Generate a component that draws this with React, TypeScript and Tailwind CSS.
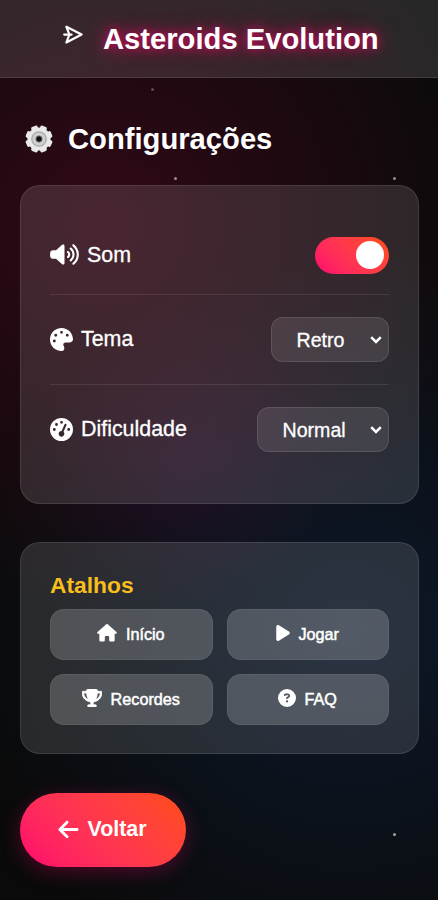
import React, { useState } from 'react'
import type { IconType } from 'react-icons'
import {
  FaArrowLeft,
  FaCircleQuestion,
  FaGaugeHigh,
  FaHouse,
  FaPalette,
  FaPlay,
  FaTrophy,
  FaVolumeHigh,
} from 'react-icons/fa6'

interface IShortcut {
  label: string
  icon: IconType
  iconClass: string
}

const shortcuts: IShortcut[] = [
  { label: 'Início', icon: FaHouse, iconClass: 'w-[20px] h-[17.5px] -mt-[3px]' },
  { label: 'Jogar', icon: FaPlay, iconClass: 'w-[14px] h-[18px] -mt-[3px]' },
  {
    label: 'Recordes',
    icon: FaTrophy,
    iconClass: 'w-[20px] h-[18px] -mt-[3px] [stroke:white] [stroke-width:22px]',
  },
  { label: 'FAQ', icon: FaCircleQuestion, iconClass: 'size-[18px] -mt-[3px]' },
]

const stars = [
  'left-[151px] top-[88px] opacity-40',
  'left-[174px] top-[177px] opacity-80',
  'left-[393px] top-[177px] opacity-80',
  'left-[393px] top-[833px] opacity-90',
]

const ShipIcon = () => (
  <svg
    viewBox="0 0 20 20"
    className="w-5 h-5 -mt-[10px]"
    fill="none"
    stroke="white"
    strokeWidth="2.2"
    strokeLinejoin="round"
    strokeLinecap="round"
  >
    <path d="M3.4 1.8 L18.6 9.6 L3.4 17.4 L6.4 9.6 Z" />
    <path d="M1.2 9.6 H8.6" />
  </svg>
)

const GearIcon = () => (
  <svg viewBox="0 0 28 28" className="w-7 h-7">
    <g fill="#e9e9e9">
      {[0, 45, 90, 135].map((angle) => (
        <rect
          key={angle}
          x="10.6"
          y="0.4"
          width="6.8"
          height="27.2"
          rx="1.6"
          transform={`rotate(${angle + 22.5} 14 14)`}
        />
      ))}
      <circle cx="14" cy="14" r="11.6" />
    </g>
    <circle cx="14" cy="14" r="7.2" fill="#cfcfcf" stroke="#a8a8a8" strokeWidth="1.3" />
    <circle cx="14" cy="14" r="3.2" fill="#151013" stroke="#8b8b8b" strokeWidth="0.8" />
  </svg>
)

const SelectBox: React.FC<{
  value: string
  options: string[]
  className: string
  onChange: (v: string) => void
}> = ({ value, options, className, onChange }) => (
  <div className={`relative h-[45px] ${className}`}>
    <select
      value={value}
      onChange={(e) => onChange(e.target.value)}
      className="w-full h-full appearance-none rounded-[12px] border border-white/10 bg-white/10 pl-[24.5px] pt-[2px] text-[19.6px] text-white outline-none [-webkit-text-stroke:0.3px_white]"
    >
      {options.map((o) => (
        <option key={o} className="bg-neutral-900">
          {o}
        </option>
      ))}
    </select>
    <svg
      viewBox="0 0 12 8"
      className="pointer-events-none absolute right-[7px] top-[19px] w-3 h-2"
      fill="none"
      stroke="white"
      strokeWidth="2.5"
    >
      <path d="M1.2 1.2 L6 6 L10.8 1.2" />
    </svg>
  </div>
)

const App = () => {
  const [sound, setSound] = useState(true)
  const [theme, setTheme] = useState('Retro')
  const [difficulty, setDifficulty] = useState('Normal')

  return (
    <div className="relative h-[900px] w-[438px] overflow-hidden bg-[#0a0a0a] bg-[radial-gradient(circle_at_24%_25%,rgba(255,0,85,0.155),transparent_52%),radial-gradient(circle_at_80%_70%,rgba(30,120,255,0.13),transparent_54%),radial-gradient(circle_at_42%_50%,rgba(160,10,130,0.07),transparent_28%)] font-['Liberation_Sans',Arial,sans-serif] text-white">
      {stars.map((s) => (
        <span key={s} className={`absolute size-[3px] rounded-full bg-[#b9aeb6] ${s}`} />
      ))}

      {/* Header */}
      <header className="flex h-[78px] items-center border-b border-white/10 bg-white/[0.12] pl-[63px] pt-[2px]">
        <ShipIcon />
        <h1 className="ml-[20px] whitespace-nowrap text-[29.2px] font-bold leading-none [text-shadow:0_0_10px_rgba(255,0,110,0.7),0_0_20px_rgba(255,0,110,0.6)]">
          Asteroids Evolution
        </h1>
      </header>

      <main className="pl-5 pr-[19px]">
        <div className="flex h-[107px] items-center pl-[5px] pt-[14px]">
          <GearIcon />
          <h2 className="ml-[15px] mt-[2px] text-[29.2px] font-bold leading-none">
            Configurações
          </h2>
        </div>

        {/* Settings */}
        <section className="h-[319px] rounded-[20px] border border-white/10 bg-white/[0.12] px-[29px] pt-[30px]">
          <div className="flex h-[79px] items-center justify-between border-b border-white/[0.09]">
            <label className="flex items-center text-[21.4px] [-webkit-text-stroke:0.3px_white]">
              <FaVolumeHigh className="mr-[8px] w-[29px] h-[23px]" />
              Som
            </label>
            <button
              onClick={() => setSound(!sound)}
              aria-label="Som"
              className={`flex h-[37px] w-[74px] items-center rounded-full px-[5px] ${
                sound
                  ? 'justify-end bg-linear-45 from-[#ff006e] to-[#ff4d0d]'
                  : 'justify-start bg-white/20'
              }`}
            >
              <span className="size-[28px] rounded-full bg-white" />
            </button>
          </div>
          <div className="flex h-[90px] items-center justify-between border-b border-white/[0.09]">
            <label className="flex items-center text-[21.4px] [-webkit-text-stroke:0.3px_white]">
              <FaPalette className="mr-2 size-[23px]" />
              Tema
            </label>
            <SelectBox
              value={theme}
              options={['Retro', 'Neon', 'Clássico']}
              className="w-[118px]"
              onChange={setTheme}
            />
          </div>
          <div className="flex h-[89px] items-center justify-between">
            <label className="flex items-center text-[21.4px] [-webkit-text-stroke:0.3px_white]">
              <FaGaugeHigh className="mr-2 size-[23px]" />
              Dificuldade
            </label>
            <SelectBox
              value={difficulty}
              options={['Fácil', 'Normal', 'Difícil']}
              className="w-[132px]"
              onChange={setDifficulty}
            />
          </div>
        </section>

        {/* Shortcuts */}
        <section className="mt-[38px] h-[212px] rounded-[20px] border border-white/10 bg-white/[0.12] px-[29px] pt-[29px]">
          <h3 className="mb-[11px] text-[22.8px] font-bold leading-[26px] text-[#f9bd1c]">
            Atalhos
          </h3>
          <div className="grid grid-cols-2 gap-[14px]">
            {shortcuts.map(({ label, icon: Icon, iconClass }) => (
              <button
                key={label}
                className="flex h-[51px] items-center justify-center gap-[9px] rounded-[14px] border border-white/[0.06] bg-white/[0.19] pr-px text-[16.2px] [-webkit-text-stroke:0.5px_white]"
              >
                <Icon className={iconClass} />
                {label}
              </button>
            ))}
          </div>
        </section>

        <button className="mt-[39px] flex h-[74px] w-[166px] items-center justify-center gap-[7px] rounded-full bg-linear-45 from-[#ff006e] to-[#ff4d0d] pb-[2px] pr-[2px] text-[21.4px] font-bold shadow-[0_5px_20px_rgba(255,0,110,0.28)]">
          <FaArrowLeft className="mt-px size-[23px]" />
          Voltar
        </button>
      </main>
    </div>
  )
}

export default App
